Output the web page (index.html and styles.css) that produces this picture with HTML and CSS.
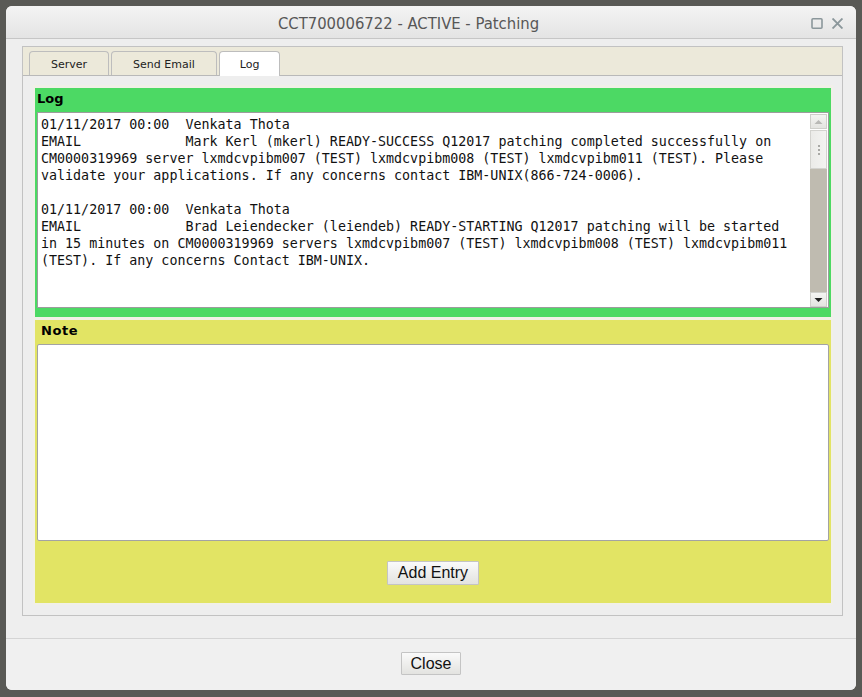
FILE: index.html
```html
<!DOCTYPE html>
<html lang="en">
<head>
<meta charset="utf-8">
<title>CCT700006722 - ACTIVE - Patching</title>
<link rel="stylesheet" href="styles.css">
</head>
<body>
<div class="dialog">
  <div class="titlebar">
    <h1 class="title">CCT700006722 - ACTIVE - Patching</h1>
    <div class="win-icons">
      <svg class="ico" width="12" height="11" viewBox="0 0 12 11"><rect x="1" y="0.8" width="10" height="9.4" rx="1" fill="none" stroke="#8b979b" stroke-width="1.6"/></svg>
      <svg class="ico" width="11" height="11" viewBox="0 0 11 11"><path d="M1.2 1.2 L9.8 9.8 M9.8 1.2 L1.2 9.8" stroke="#8b979b" stroke-width="1.9" stroke-linecap="square"/></svg>
    </div>
  </div>
  <div class="content">
    <div class="tabs">
      <div class="tab-bar">
        <div class="tab">Server</div>
        <div class="tab">Send Email</div>
        <div class="tab active">Log</div>
      </div>
      <div class="tab-panel">
        <div class="frame">
          <section class="log-box">
            <div class="box-label">Log</div>
            <div class="log-area">
<pre class="log-text">01/11/2017 00:00  Venkata Thota
EMAIL             Mark Kerl (mkerl) READY-SUCCESS Q12017 patching completed successfully on
CM0000319969 server lxmdcvpibm007 (TEST) lxmdcvpibm008 (TEST) lxmdcvpibm011 (TEST). Please
validate your applications. If any concerns contact IBM-UNIX(866-724-0006).

01/11/2017 00:00  Venkata Thota
EMAIL             Brad Leiendecker (leiendeb) READY-STARTING Q12017 patching will be started
in 15 minutes on CM0000319969 servers lxmdcvpibm007 (TEST) lxmdcvpibm008 (TEST) lxmdcvpibm011
(TEST). If any concerns Contact IBM-UNIX.</pre>
              <div class="scrollbar">
                <div class="sb-btn">
                  <svg width="9" height="6" viewBox="0 0 9 6"><path d="M0.5 5 L4.5 1 L8.5 5 Z" fill="#b9b9b6"/></svg>
                </div>
                <div class="sb-thumb">
                  <span class="dot"></span><span class="dot"></span><span class="dot"></span>
                </div>
                <div class="sb-track"></div>
                <div class="sb-btn">
                  <svg width="9" height="6" viewBox="0 0 9 6"><path d="M0.5 1 L4.5 5 L8.5 1 Z" fill="#222"/></svg>
                </div>
              </div>
            </div>
          </section>
          <section class="note-box">
            <div class="box-label note">Note</div>
            <textarea class="note-area"></textarea>
            <div class="actions"><button class="btn add">Add Entry</button></div>
          </section>
        </div>
      </div>
    </div>
  </div>
  <div class="button-pane"><button class="btn close">Close</button></div>
</div>
</body>
</html>
```
FILE: styles.css
```css
* { box-sizing: border-box; }

html, body {
  margin: 0;
  height: 100%;
}

body {
  background: #595955;
  padding: 6px;
  font-family: "DejaVu Sans", sans-serif;
}

.dialog {
  width: 850px;
  height: 684px;
  background: #eeeeee;
  border-radius: 6px;
  overflow: hidden;
  display: flex;
  flex-direction: column;
}

.titlebar {
  height: 33px;
  flex: none;
  display: flex;
  align-items: center;
  background: linear-gradient(#f4f4f4, #e4e4e4);
  border-bottom: 1px solid #c6c6c6;
}

.title {
  flex: 1;
  margin: 0;
  text-align: center;
  font-family: "DejaVu Sans Condensed", "DejaVu Sans", sans-serif;
  font-stretch: condensed;
  font-weight: normal;
  font-size: 16.5px;
  color: #575757;
  padding-top: 3px;
}

.win-icons {
  display: flex;
  align-items: center;
  gap: 9px;
  padding-right: 13px;
  padding-top: 2px;
}

.ico { display: block; }

.content {
  flex: none;
  padding: 7px 13px 22px 16px;
}

.tabs {
  height: 570px;
  border: 1px solid #c2c2c2;
  background: #eeeeee;
  display: flex;
  flex-direction: column;
}

.tab-bar {
  height: 28px;
  flex: none;
  background: #ece9da;
  display: flex;
  align-items: flex-end;
  gap: 2px;
  padding-left: 6px;
  position: relative;
  z-index: 1;
}

.tab {
  height: 24px;
  padding: 1px 21px 0;
  font-size: 11px;
  color: #222;
  line-height: 23px;
  background: #ece9da;
  border: 1px solid #bdbdbd;
  border-bottom: none;
  border-radius: 4px 4px 0 0;
}

.tab.active {
  background: #ffffff;
  height: 25px;
  margin-bottom: -1px;
  padding: 1px 20px 0;
}

.tab-panel {
  flex: 1;
  border-top: 1px solid #b9b9b9;
  padding: 9px 9px 10px 10px;
}

.frame {
  height: 520px;
  background: #f1f0e8;
  padding: 3px 2px 2px;
  display: flex;
  flex-direction: column;
  gap: 3px;
}

.log-box {
  height: 229px;
  background: #4cd964;
  padding: 0 2px 9px;
  display: flex;
  flex-direction: column;
}

.box-label {
  height: 24px;
  line-height: 21px;
  font-weight: bold;
  font-size: 13px;
  color: #000;
}

.box-label.note {
  line-height: 21px;
  padding-left: 4px;
  letter-spacing: 0.6px;
}

.log-area {
  height: 196px;
  background: #fff;
  border: 1px solid #9c9c9c;
  display: flex;
}

.log-text {
  flex: 1;
  margin: 0;
  padding: 3px 0 0 3px;
  font-family: "DejaVu Sans Mono", monospace;
  font-size: 13.33px;
  line-height: 17px;
  color: #111;
  white-space: pre;
  overflow: hidden;
}

.scrollbar {
  width: 17px;
  flex: none;
  margin-right: 1px;
  padding: 1px 0 0;
  display: flex;
  flex-direction: column;
  background: #fff;
}

.sb-btn {
  height: 15px;
  flex: none;
  background: linear-gradient(#f4f4f2, #e4e4e1);
  border: 1px solid #cfcfcb;
  display: flex;
  align-items: center;
  justify-content: center;
}

.sb-thumb {
  height: 39px;
  flex: none;
  margin-top: 1px;
  background: linear-gradient(90deg, #ebebe8, #f3f3f1);
  border: 1px solid #d3d3cf;
  display: flex;
  flex-direction: column;
  align-items: center;
  justify-content: center;
  gap: 2px;
}

.dot {
  width: 2px;
  height: 2px;
  background: #a9a9a5;
}

.sb-track {
  flex: 1;
  background: #bfbbb0;
}

.note-box {
  height: 283px;
  background: #e2e464;
  padding: 0 2px 18px;
  display: flex;
  flex-direction: column;
}

.note-area {
  height: 197px;
  width: 100%;
  resize: none;
  border: 1px solid #a3a3a3;
  border-radius: 2px;
  background: #fff;
  margin: 0;
  font-family: "DejaVu Sans Mono", monospace;
}

.actions {
  padding-top: 20px;
  display: flex;
  justify-content: center;
}

.btn {
  font-family: "Liberation Sans", Arial, sans-serif;
  font-size: 16px;
  color: #111;
  background: linear-gradient(#fafafa, #e3e3e0);
  border: 1px solid #c4c4c4;
  border-radius: 1px;
  margin: 0;
  line-height: 1;
}

.btn.add {
  height: 24px;
  padding: 0 10px;
}

.btn.close {
  height: 23px;
  padding: 0 9px;
}

.button-pane {
  flex: 1;
  background: #f0f0f0;
  border-top: 1px solid #d4d4d4;
  padding-top: 13px;
  display: flex;
  justify-content: center;
  align-items: flex-start;
}
```
